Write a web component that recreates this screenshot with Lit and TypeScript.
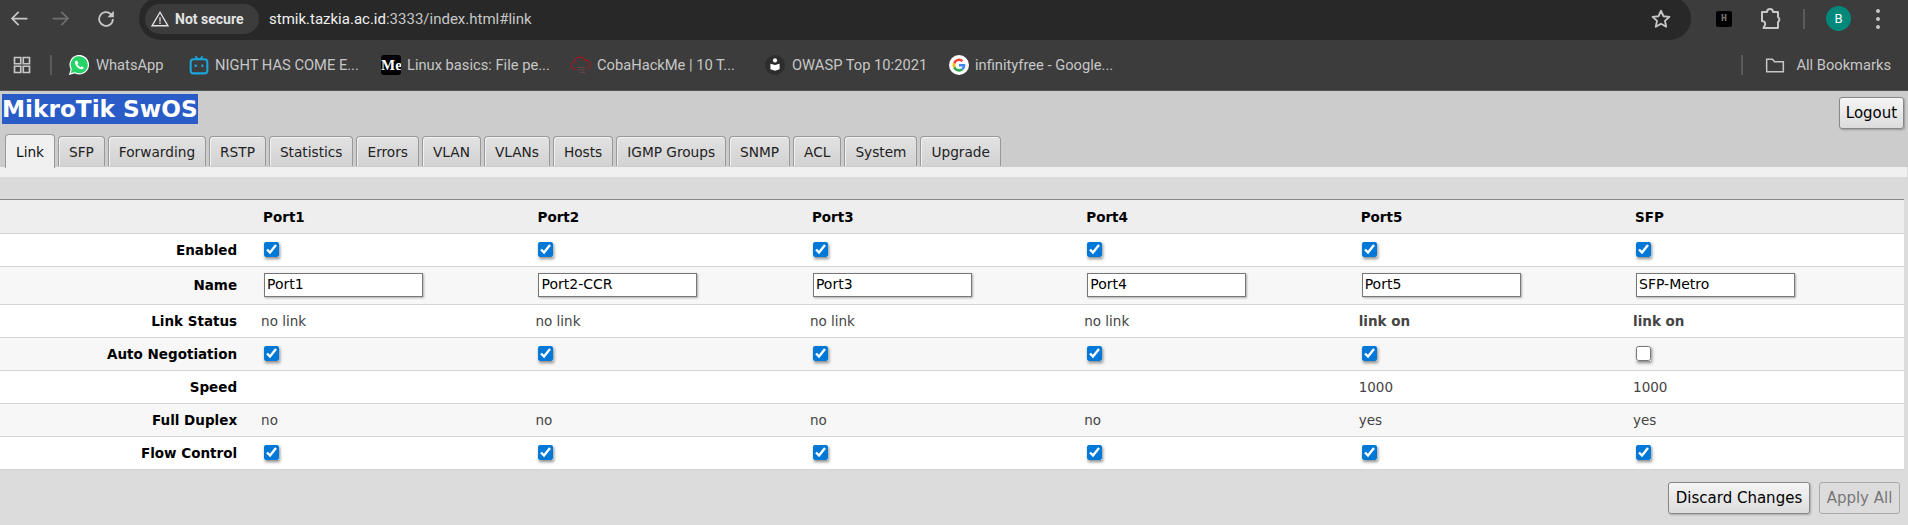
import { LitElement, html, css, svg } from 'lit';
import { customElement } from 'lit/decorators.js';

const ports = ['Port1', 'Port2', 'Port3', 'Port4', 'Port5', 'SFP'];
const names = ['Port1', 'Port2-CCR', 'Port3', 'Port4', 'Port5', 'SFP-Metro'];
const tabs = ['Link', 'SFP', 'Forwarding', 'RSTP', 'Statistics', 'Errors', 'VLAN', 'VLANs', 'Hosts', 'IGMP Groups', 'SNMP', 'ACL', 'System', 'Upgrade'];

const icon = (size: number, body: unknown) => html`<svg width=${size} height=${size} viewBox="0 0 24 24" fill="none">${body}</svg>`;

const icons = {
  back: svg`<path d="M21 12H4M11 4.5 3.5 12l7.5 7.5" stroke="#c7c7c7" stroke-width="2"/>`,
  forward: svg`<path d="M3 12h17M13 4.5l7.5 7.5-7.5 7.5" stroke="#6f6f6f" stroke-width="2"/>`,
  reload: svg`<path d="M19.5 12a7.5 7.5 0 1 1-2.3-5.4L20 9.2" stroke="#c7c7c7" stroke-width="2"/><path d="M20.5 3v7h-7z" fill="#c7c7c7"/>`,
  warn: svg`<path d="M12 3 22.5 21h-21zM12 9.5v6M12 16.8v2" stroke="#e3e3e3" stroke-width="1.8"/>`,
  star: svg`<path d="m12 3 2.7 6 6.5.7-4.9 4.3 1.4 6.4L12 17.100l-5.700 3.300 1.400-6.400-4.900-4.300 6.500-.7z" stroke="#c7c7c7" stroke-width="2" stroke-linejoin="round"/>`,
  puzzle: svg`<path d="M4 5h5a3 3 0 0 1 6 0h5v5a3 3 0 0 1 0 5v6H5.500l1.500-3a3 3 0 0 0-3-4z" stroke="#c7c7c7" stroke-width="2" stroke-linejoin="round"/>`,
  grid: svg`<path d="M3 3h7.500v7.500H3zM13.500 3H21v7.500h-7.500zM3 13.500h7.500V21H3zM13.500 13.500H21V21h-7.500z" stroke="#c7c7c7" stroke-width="2"/>`,
  folder: svg`<path d="M2 5h7l2.500 3H22v12H2z" stroke="#c7c7c7" stroke-width="1.800"/>`,
  whatsapp: svg`<path d="M1 23l1.700-6A11 11 0 1 1 7 21.300z" fill="#25d366" stroke="#fff" stroke-width="1.500"/><path d="M8.600 6.500c-.5 0-1.500.9-1.500 2.700 0 3 4.300 7.600 7.800 7.800 1.700 0 2.700-1 2.800-2.100l-2.600-1.400-1.200 1.200c-1.500-.5-3-2-3.600-3.500l1-1.200-1.300-2.900z" fill="#fff"/>`,
  bili: svg`<path d="M7.500 1.500 11 5M16.500 1.500 13 5" stroke="#1ba6dc" stroke-width="2"/><rect x="2" y="5" width="20" height="17" rx="3.500" stroke="#1ba6dc" stroke-width="2.500"/><path d="M8 11.500v3M16 11.500v3" stroke="#1ba6dc" stroke-width="2.500"/>`,
  cloud: svg`<path d="M6.500 17H5a4.500 4.500 0 0 1-.5-9A6.500 6.500 0 0 1 17 6.500a5.300 5.300 0 0 1 2 10.400" stroke="#b3141b" stroke-width="1.300"/><path d="M8 15h9M8 18h8M11 21h6" stroke="#6a4245" stroke-width="1.300"/>`,
  owasp: svg`<circle cx="12" cy="12" r="12" fill="#2d2d2d"/><circle cx="12" cy="6.500" r="2.500" fill="#fff"/><path d="M6.500 10.500 12 12l5.500-1.500v6.500L12 19l-5.500-2z" fill="#fff"/>`,
  google: svg`<circle cx="12" cy="12" r="12" fill="#fff"/><path d="M19.500 12.300c0-.6 0-1.100-.2-1.600H12v3h4.200a3.700 3.700 0 0 1-1.600 2.400l2.500 1.900c1.500-1.400 2.400-3.400 2.400-5.700z" fill="#4285f4"/><path d="M12 20c2.100 0 3.900-.7 5.100-1.900l-2.500-2c-.7.500-1.600.8-2.600.8a4.600 4.600 0 0 1-4.300-3.200L5 15.700A8 8 0 0 0 12 20z" fill="#34a853"/><path d="M7.700 13.700a4.700 4.700 0 0 1 0-3L5 8.700a8 8 0 0 0 0 7z" fill="#fbbc05"/><path d="M12 7.200c1.200 0 2.200.4 3 1.200l2.200-2.200A8 8 0 0 0 5 8.700l2.700 2a4.600 4.600 0 0 1 4.300-3.500z" fill="#ea4335"/>`,
};

const bookmarks = [
  { icon: icons.whatsapp, text: 'WhatsApp', cls: 'b1' },
  { icon: icons.bili, text: 'NIGHT HAS COME E...', cls: 'b2' },
  { icon: null, text: 'Linux basics: File pe...', cls: 'b3' },
  { icon: icons.cloud, text: 'CobaHackMe | 10 T...', cls: 'b4' },
  { icon: icons.owasp, text: 'OWASP Top 10:2021', cls: 'b5' },
  { icon: icons.google, text: 'infinityfree - Google...', cls: 'b6' },
];

@customElement('app-root')
export class AppRoot extends LitElement {
  static styles = css`
    :host {
      display: block;
      height: 525px;
      overflow: hidden;
      background: #dcdcdc;
      font-family: 'DejaVu Sans', Verdana, sans-serif;
      font-size: 13.5px;
      color: #000;
    }
    svg { display: block; flex: none; }

    /* browser chrome */
    .toolbar {
      height: 40px;
      overflow: hidden;
      background: #3c3c3c;
      display: flex;
      align-items: center;
      font-family: Roboto, 'Noto Sans', sans-serif;
    }
    .nav { display: flex; align-items: center; width: 139px; flex: none; padding-left: 9px; gap: 20px; box-sizing: border-box; margin-top: -3px; }
    .nav .reload { margin-left: 4px; }
    .omni {
      width: 1552px;
      height: 43px;
      align-self: flex-start;
      margin-top: -3px;
      background: #282828;
      border-radius: 22px;
      display: flex;
      align-items: center;
      padding: 0 19px 0 6px;
      box-sizing: border-box;
      flex: none;
    }
    .chip {
      width: 114px;
      height: 30px;
      border-radius: 15px;
      background: #3c3c3c;
      display: flex;
      align-items: center;
      gap: 6px;
      padding-left: 6px;
      box-sizing: border-box;
      color: #e3e3e3;
      font-weight: 700;
      font-size: 14px;
      flex: none;
    }
    .url { margin-left: 10px; font-size: 15px; color: #c7c7c7; flex: 1; }
    .url b { font-weight: 400; color: #f1f1f1; }
    .ext { display: flex; align-items: center; flex: 1; padding-left: 25px; margin-top: -3px; }
    .hbox {
      width: 16px; height: 16px; background: #000; border-radius: 2px;
      color: #777; font: 700 10px/16px 'Liberation Mono', monospace; text-align: center; flex: none;
    }
    .ext .puzzle { margin-left: 26px; }
    .vline { width: 2px; height: 20px; background: #5b5b5b; flex: none; }
    .ext .vline { margin-left: 21px; }
    .avatar {
      width: 25px; height: 25px; margin-left: 21px; border-radius: 50%;
      background: #00897b; color: #fff; font-size: 13px; line-height: 25px; text-align: center; flex: none;
    }
    .dots { margin-left: 25px; display: flex; flex-direction: column; gap: 4px; }
    .dots i { width: 4px; height: 4px; border-radius: 50%; background: #c7c7c7; display: block; }

    .bookmarks {
      height: 50px;
      background: #3c3c3c;
      display: flex;
      align-items: center;
      padding-left: 12px;
      box-sizing: border-box;
      font-family: Roboto, 'Noto Sans', sans-serif;
      font-size: 14.7px;
      color: #c7c7c7;
    }
    .bookmarks .first { margin-left: 18px; margin-right: 17px; }
    .bm { display: flex; align-items: center; gap: 6px; white-space: nowrap; flex: none; }
    .b1 { width: 120px; }
    .b2 { width: 192px; }
    .b3 { width: 190px; }
    .b4 { width: 194px; }
    .b5 { width: 184px; }
    .b6 { width: 170px; }
    .b1, .b5 { gap: 7px; }
    .bm-m {
      width: 20px; height: 20px; border-radius: 3px; background: #000; overflow: hidden; flex: none;
      color: #fff; font: 700 15px/20px 'Liberation Serif', serif; white-space: nowrap;
    }
    .bm-right { margin-left: auto; display: flex; align-items: center; gap: 11px; padding-right: 17px; }
    .bm-right .vline { margin-right: 11px; }

    /* SwOS page */
    .top {
      background: #ccc;
      border-top: 1px solid #555;
      height: 77px;
      box-sizing: border-box;
      display: flex;
      flex-direction: column;
    }
    .title-row { display: flex; justify-content: space-between; align-items: flex-start; height: 43px; padding: 3px 4px 0 2px; box-sizing: border-box; }
    h1 {
      margin: 0;
      font-size: 23.200px;
      line-height: 30px;
      font-weight: 700;
      color: #fff;
      background: #2a5cc8;
      white-space: nowrap;
    }
    .btn {
      font: inherit;
      font-family: 'DejaVu Sans', Verdana, sans-serif;
      font-size: 15px;
      color: #000;
      height: 32px;
      padding: 0;
      border: 1px solid #888;
      border-radius: 3px;
      background: linear-gradient(#f5f5f5, #dcdcdc);
      box-shadow: 1px 1px 2px rgba(0, 0, 0, .25);
    }
    .logout { width: 65px; margin-top: 3px; }
    .tabs { display: flex; align-items: flex-start; gap: 3px; padding-left: 5px; height: 33px; font-size: 13.700px; }
    .tab {
      height: 29px;
      margin-top: 2px;
      padding: 0 10px;
      border: 1px solid #999;
      border-bottom: 0;
      border-radius: 4px 4px 0 0;
      background: linear-gradient(#e2e2e2, #d2d2d2);
      box-shadow: inset 1px 1px 0 #f2f2f2;
      line-height: 30px;
      color: #222;
      white-space: nowrap;
    }
    .tab.active { height: 33px; margin-top: 0; line-height: 34px; background: #f0f0f0; color: #111; box-shadow: none; }

    .strip { height: 10px; width: 1907px; background: #f0f0f0; }
    .band { height: 23px; background: #dadada; display: flex; align-items: flex-end; }
    .rule { width: 1904px; height: 1px; background: #888; }
    table { width: 1904px; border-collapse: collapse; table-layout: fixed; }
    col.label { width: 257.600px; }
    th, td { padding: 0; border-bottom: 1px solid #d4d4d4; }
    thead tr { height: 33px; }
    thead th { background: #eee; text-align: left; padding: 2px 0 0 5.500px; font-weight: 700; }
    tbody th { text-align: right; padding-right: 20.500px; font-weight: 700; }
    tbody td { padding-left: 3.500px; color: #444; }
    tr.row { height: 33px; background: #fff; }
    tr.row.alt { background: #f7f7f7; }
    tr.name { height: 38px; background: #f7f7f7; }
    .val.on { font-weight: 700; }
    input[type='checkbox'] {
      display: block;
      width: 15px;
      height: 15px;
      margin: -1px 0 0 3px;
      accent-color: #0078d7;
      box-shadow: 1px 2px 3px rgba(0, 0, 0, .45);
      border-radius: 3px;
    }
    input[type='text'] {
      display: block;
      width: 159px;
      height: 24px;
      margin: 0 0 0 3px;
      padding: 0 2px 2px 2px;
      box-sizing: border-box;
      border: 1px solid #777;
      font: 14px 'DejaVu Sans', Verdana, sans-serif;
      color: #000;
      background: #fff;
      box-shadow: 1px 1px 2px rgba(0, 0, 0, .3);
      outline: none;
    }
    .actions { display: flex; justify-content: flex-end; gap: 9px; padding: 12px 8px 0 0; }
    .discard { width: 142px; height: 32px; }
    .apply { width: 81px; height: 32px; color: #777; border-color: #aaa; background: #dcdcdc; box-shadow: none; }
  `;

  private boxes(checked: boolean[]) {
    return checked.map((c) => html`<td><input type="checkbox" .checked=${c} /></td>`);
  }

  private values(vals: string[], bold = false) {
    return vals.map((v) => html`<td class="val ${bold && v === 'link on' ? 'on' : ''}">${v}</td>`);
  }

  render() {
    const all = ports.map(() => true);
    return html`
      <div class="toolbar">
        <div class="nav">
          ${icon(21, icons.back)}${icon(21, icons.forward)}
          <span class="reload">${icon(22, icons.reload)}</span>
        </div>
        <div class="omni">
          <div class="chip">${icon(18, icons.warn)}<span>Not secure</span></div>
          <div class="url"><b>stmik.tazkia.ac.id</b>:3333/index.html#link</div>
          ${icon(22, icons.star)}
        </div>
        <div class="ext">
          <div class="hbox">H</div>
          <span class="puzzle">${icon(24, icons.puzzle)}</span>
          <div class="vline"></div>
          <div class="avatar">B</div>
          <div class="dots"><i></i><i></i><i></i></div>
        </div>
      </div>
      <div class="bookmarks">
        ${icon(20, icons.grid)}
        <div class="vline first"></div>
        ${bookmarks.map(
          (b) => html`<div class="bm ${b.cls}">
            ${b.icon ? icon(20, b.icon) : html`<span class="bm-m">Me</span>`}
            <span>${b.text}</span>
          </div>`
        )}
        <div class="bm-right">
          <div class="vline"></div>
          ${icon(20, icons.folder)}
          <span>All Bookmarks</span>
        </div>
      </div>

      <div class="top">
        <div class="title-row">
          <h1>MikroTik SwOS</h1>
          <button class="btn logout">Logout</button>
        </div>
        <div class="tabs">
          ${tabs.map((t, i) => html`<div class="tab ${i === 0 ? 'active' : ''}">${t}</div>`)}
        </div>
      </div>
      <div class="strip"></div>
      <div class="band"><div class="rule"></div></div>
      <table>
        <colgroup>
          <col class="label" />
          ${ports.map(() => html`<col />`)}
        </colgroup>
        <thead>
          <tr>
            <th></th>
            ${ports.map((p) => html`<th>${p}</th>`)}
          </tr>
        </thead>
        <tbody>
          <tr class="row"><th>Enabled</th>${this.boxes(all)}</tr>
          <tr class="name">
            <th>Name</th>
            ${names.map((n) => html`<td><input type="text" .value=${n} /></td>`)}
          </tr>
          <tr class="row">
            <th>Link Status</th>
            ${this.values(['no link', 'no link', 'no link', 'no link', 'link on', 'link on'], true)}
          </tr>
          <tr class="row alt">
            <th>Auto Negotiation</th>
            ${this.boxes([true, true, true, true, true, false])}
          </tr>
          <tr class="row"><th>Speed</th>${this.values(['', '', '', '', '1000', '1000'])}</tr>
          <tr class="row alt"><th>Full Duplex</th>${this.values(['no', 'no', 'no', 'no', 'yes', 'yes'])}</tr>
          <tr class="row"><th>Flow Control</th>${this.boxes(all)}</tr>
        </tbody>
      </table>
      <div class="actions">
        <button class="btn discard">Discard Changes</button>
        <button class="btn apply">Apply All</button>
      </div>
    `;
  }
}
